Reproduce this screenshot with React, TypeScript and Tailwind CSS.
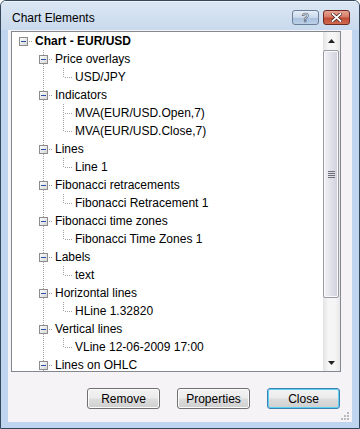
import React from "react";

type CellKind = "blank" | "pipe" | "tee" | "ell" | "box" | "rootBox";

type Row = {
  label: string;
  cells: CellKind[];
  bold?: boolean;
};

const groups: [string, string[]][] = [
  ["Price overlays", ["USD/JPY"]],
  ["Indicators", ["MVA(EUR/USD.Open,7)", "MVA(EUR/USD.Close,7)"]],
  ["Lines", ["Line 1"]],
  ["Fibonacci retracements", ["Fibonacci Retracement 1"]],
  ["Fibonacci time zones", ["Fibonacci Time Zones 1"]],
  ["Labels", ["text"]],
  ["Horizontal lines", ["HLine 1.32820"]],
  ["Vertical lines", ["VLine 12-06-2009 17:00"]],
  ["Lines on OHLC", []],
];

const buildRows = (): Row[] => {
  const rows: Row[] = [{ label: "Chart - EUR/USD", cells: ["rootBox"], bold: true }];
  groups.forEach(([name, kids]) => {
    rows.push({ label: name, cells: ["blank", "box"] });
    kids.forEach((k, i) => {
      rows.push({ label: k, cells: ["blank", "pipe", i === kids.length - 1 ? "ell" : "tee"] });
    });
  });
  return rows;
};

const dot = { stroke: "#a3a3a3", strokeWidth: 1, strokeDasharray: "1 1" };

const TreeCell: React.FC<{ kind: CellKind }> = ({ kind }) => (
  <svg width="20" height="18" className="block shrink-0">
    <defs>
      <linearGradient id="exp" x1="0" y1="0" x2="1" y2="1">
        <stop offset="0" stopColor="#ffffff" />
        <stop offset="1" stopColor="#d4d4d4" />
      </linearGradient>
    </defs>
    {(kind === "pipe" || kind === "tee" || kind === "box") && (
      <line x1="10.5" y1="0" x2="10.5" y2="18" {...dot} />
    )}
    {kind === "ell" && <line x1="10.5" y1="0" x2="10.5" y2="10" {...dot} />}
    {(kind === "tee" || kind === "ell") && <line x1="12" y1="9.5" x2="20" y2="9.5" {...dot} />}
    {(kind === "box" || kind === "rootBox") && (
      <>
        <line x1="16" y1="9.5" x2="20" y2="9.5" {...dot} />
        <rect x="6.5" y="5.5" width="8" height="8" fill="url(#exp)" stroke="#8c8c8c" />
        <line x1="8" y1="9.5" x2="13" y2="9.5" stroke="#2c4fa8" strokeWidth="1" />
      </>
    )}
  </svg>
);

const Btn: React.FC<{ label: string; primary?: boolean }> = ({ label, primary }) => (
  <div
    className={
      "w-[73px] h-[21px] rounded-[3px] border flex items-center justify-center text-[12px] text-black bg-[linear-gradient(#f3f3f3_0%,#ebebeb_48%,#dddddd_52%,#cfcfcf_100%)] " +
      (primary
        ? "border-[#3c7fb1] shadow-[inset_0_0_0_1px_#5fd0f3]"
        : "border-[#707070] shadow-[inset_0_0_0_1px_#fbfbfb]")
    }
  >
    {label}
  </div>
);

export default function App() {
  const rows = buildRows();
  return (
    <div
      className="w-[360px] h-[429px] flex flex-col border border-[#35475a] rounded-t-[6px] bg-[#bfd4ee] overflow-hidden"
      style={{ fontFamily: '"Liberation Sans", Arial, sans-serif' }}
    >
      {/* title bar */}
      <div className="h-[29px] shrink-0 flex items-start bg-[linear-gradient(#dbe6f3,#c9daee)] border-t border-[#eef4fb]">
        <span className="ml-[11px] mt-[9px] text-[12px] leading-[14px] text-black">Chart Elements</span>
        <div className="ml-auto mr-[9px] mt-[8px] flex gap-[4px]">
          <div className="w-[27px] h-[15px] rounded-[3px] border border-[#6b7f99] bg-[linear-gradient(#e6eef8_0%,#c9d8ea_50%,#a9c0dd_52%,#bcd0e8_100%)] flex items-center justify-center">
            <span className="text-[12px] leading-none font-bold text-white [-webkit-text-stroke:0.6px_#3d4d63]">?</span>
          </div>
          <div className="w-[27px] h-[15px] rounded-[3px] border border-[#6d2b24] bg-[linear-gradient(#e8a493_0%,#d47a65_48%,#c14a33_52%,#d06a4f_100%)] flex items-center justify-center">
            <svg width="11" height="9" viewBox="0 0 11 9">
              <path d="M1.5 1 L9.5 8 M9.5 1 L1.5 8" stroke="#3a1a16" strokeWidth="3.2" strokeLinecap="square" />
              <path d="M1.5 1 L9.5 8 M9.5 1 L1.5 8" stroke="#ffffff" strokeWidth="1.8" strokeLinecap="square" />
            </svg>
          </div>
        </div>
      </div>

      {/* client area */}
      <div className="flex-1 mx-[7px] mb-[6px] bg-[#f5f3f6] flex flex-col pl-[3px] pt-[1px]">
        <div className="w-[330px] h-[341px] border border-[#828790] bg-white flex overflow-hidden">
          <div className="flex-1 overflow-hidden pl-[1px] text-[12px] text-black">
            {rows.map((r, i) => (
              <div key={i} className="flex items-center h-[18px]">
                {r.cells.map((c, j) => (
                  <TreeCell key={j} kind={c} />
                ))}
                <span className={"ml-[2px] leading-[18px] whitespace-nowrap " + (r.bold ? "font-bold" : "")}>
                  {r.label}
                </span>
              </div>
            ))}
          </div>
          {/* scrollbar */}
          <div className="w-[17px] h-full flex flex-col bg-[linear-gradient(90deg,#e3e3e3,#f5f5f5_30%,#f5f5f5_70%,#e8e8e8)]">
            <div className="h-[17px] flex items-center justify-center shrink-0">
              <svg width="7" height="4" viewBox="0 0 7 4">
                <path d="M0 4 L3.5 0 L7 4 Z" fill="#222" />
              </svg>
            </div>
            <div className="h-[248px] mt-[1px] mr-[1px] rounded-[2px] border border-[#9a9aa3] bg-[linear-gradient(90deg,#f2f2f5,#dcdde6_60%,#cfd0db)] shadow-[inset_0_0_0_1px_#fafafc] flex items-center justify-center shrink-0">
              <div className="flex flex-col gap-[1px]">
                <div className="w-[7px] h-[1px] bg-[#6e6e78]" />
                <div className="w-[7px] h-[1px] bg-[#6e6e78]" />
                <div className="w-[7px] h-[1px] bg-[#6e6e78]" />
                <div className="w-[7px] h-[1px] bg-[#6e6e78]" />
              </div>
            </div>
            <div className="flex-1" />
            <div className="h-[17px] flex items-center justify-center shrink-0">
              <svg width="7" height="4" viewBox="0 0 7 4">
                <path d="M0 0 L7 0 L3.5 4 Z" fill="#222" />
              </svg>
            </div>
          </div>
        </div>

        <div className="flex justify-end gap-[17px] pr-[12px] mt-[16px]">
          <Btn label="Remove" />
          <Btn label="Properties" />
          <Btn label="Close" primary />
        </div>

        <div className="flex-1 flex items-end justify-end pr-[3px] pb-[2px]">
          <svg width="8" height="8" viewBox="0 0 8 8">
            {[
              [6, 0],
              [6, 3],
              [3, 3],
              [6, 6],
              [3, 6],
              [0, 6],
            ].map(([x, y], k) => (
              <rect key={k} x={x} y={y} width="2" height="2" fill="#b9b9c0" />
            ))}
          </svg>
        </div>
      </div>
    </div>
  );
}
